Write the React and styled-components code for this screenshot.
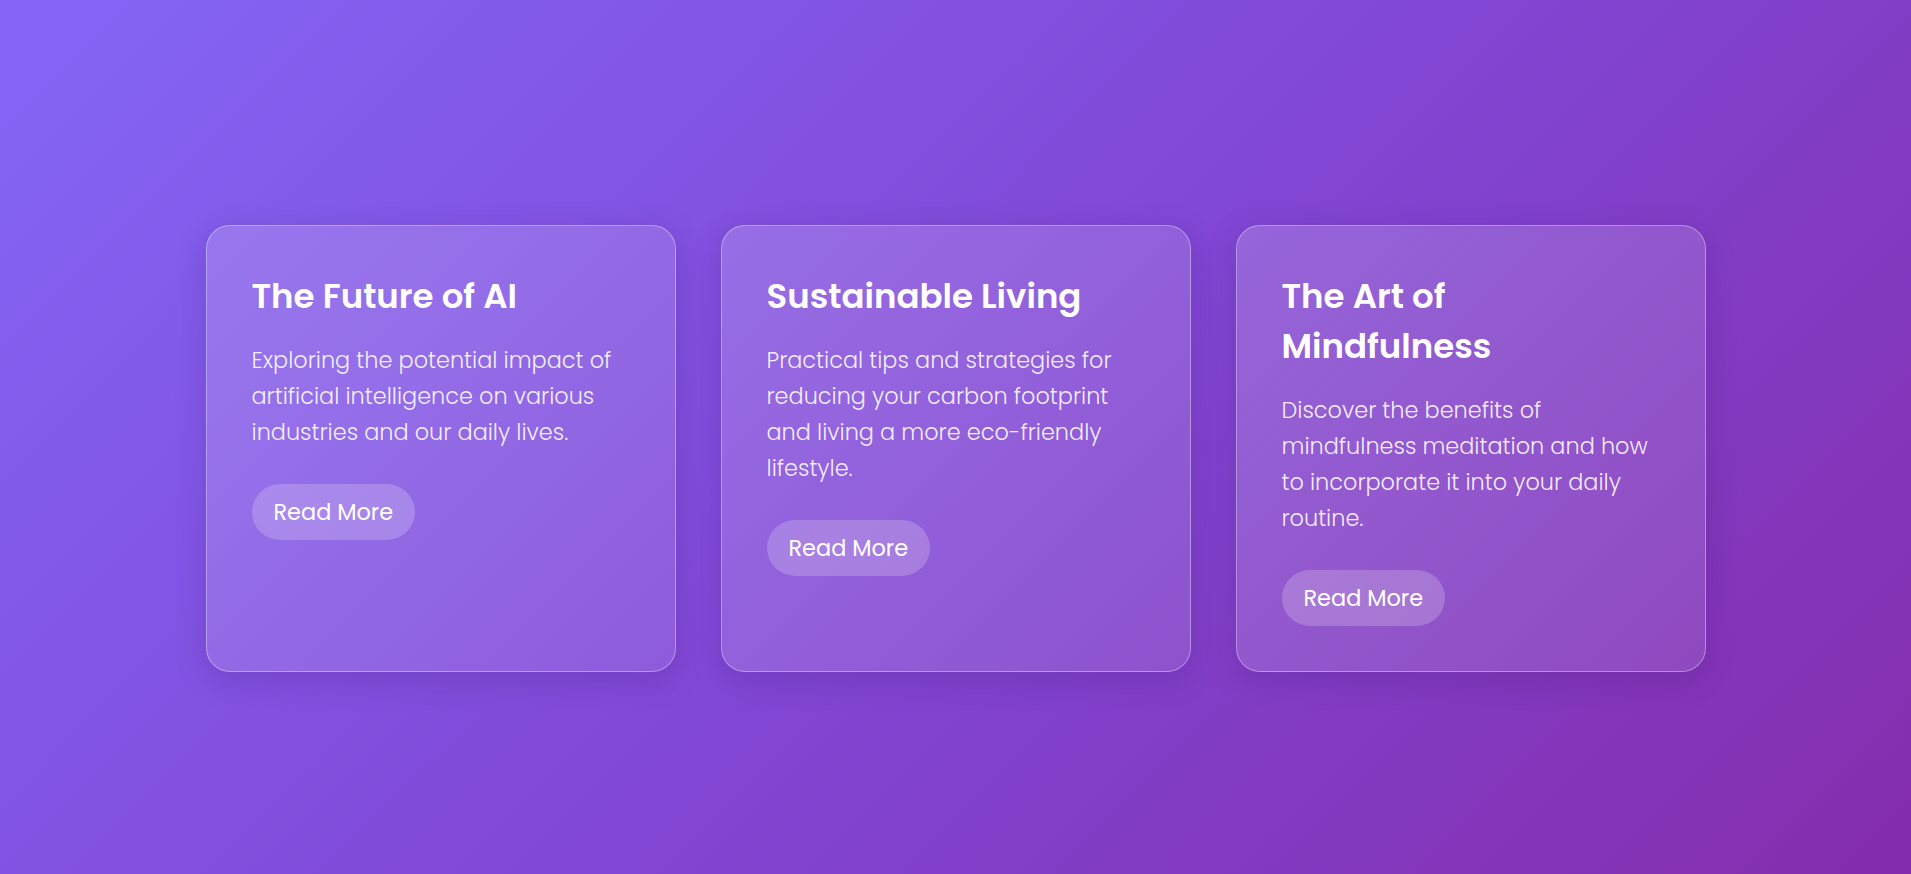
import styled, { createGlobalStyle } from "styled-components";

const GlobalStyle = createGlobalStyle`
  * {
    box-sizing: border-box;
  }
  body {
    margin: 0;
    font-family: "Poppins", "Open Sans", "Liberation Sans", sans-serif;
  }
`;

const Page = styled.div`
  min-height: 100vh;
  padding: 22px 0 0;
  display: flex;
  align-items: center;
  justify-content: center;
  background: linear-gradient(135deg, #8466f6 0%, #8148d6 50%, #842dac 100%);
`;

const Grid = styled.div`
  width: 1500px;
  display: grid;
  grid-template-columns: repeat(3, 1fr);
  gap: 45px;
`;

const Card = styled.article`
  padding: 45px;
  border-radius: 24px;
  border: 1px solid rgba(255, 255, 255, 0.35);
  background: linear-gradient(
    135deg,
    rgba(255, 255, 255, 0.17) 0%,
    rgba(255, 255, 255, 0.1) 100%
  );
  box-shadow: 0 8px 32px rgba(40, 10, 90, 0.18);
  color: #fff;
`;

const Title = styled.h2`
  margin: 0 0 21px;
  font-size: 34px;
  line-height: 50px;
  font-weight: 600;
  color: #fff;
`;

const Text = styled.p`
  margin: 0 0 34px;
  font-size: 22.4px;
  line-height: 36px;
  font-weight: 300;
  color: rgba(255, 255, 255, 0.9);
`;

const Button = styled.button`
  height: 56px;
  padding: 0 22px;
  border: none;
  border-radius: 999px;
  background: rgba(255, 255, 255, 0.2);
  color: #fff;
  font-family: inherit;
  font-size: 22.4px;
  font-weight: 400;
  cursor: pointer;
`;

const posts = [
  {
    title: "The Future of AI",
    text: "Exploring the potential impact of artificial intelligence on various industries and our daily lives.",
  },
  {
    title: "Sustainable Living",
    text: "Practical tips and strategies for reducing your carbon footprint and living a more eco-friendly lifestyle.",
  },
  {
    title: "The Art of Mindfulness",
    text: "Discover the benefits of mindfulness meditation and how to incorporate it into your daily routine.",
  },
];

function App() {
  return (
    <>
      <GlobalStyle />
      <Page>
        <Grid>
          {posts.map((post) => (
            <Card key={post.title}>
              <Title>{post.title}</Title>
              <Text>{post.text}</Text>
              <Button>Read More</Button>
            </Card>
          ))}
        </Grid>
      </Page>
    </>
  );
}

export default App;
